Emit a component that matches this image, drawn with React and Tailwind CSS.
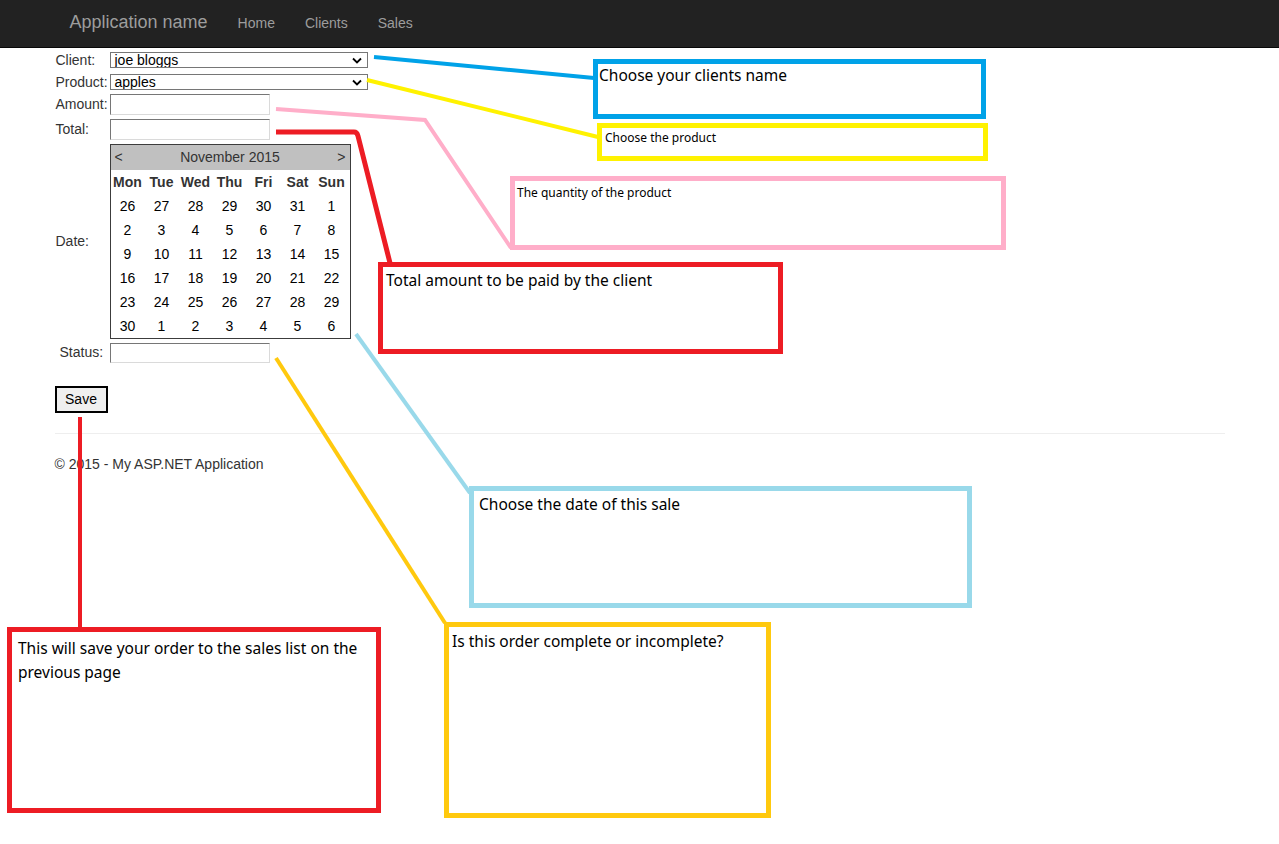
import React from 'react';

const weeks = [
  [26, 27, 28, 29, 30, 31, 1],
  [2, 3, 4, 5, 6, 7, 8],
  [9, 10, 11, 12, 13, 14, 15],
  [16, 17, 18, 19, 20, 21, 22],
  [23, 24, 25, 26, 27, 28, 29],
  [30, 1, 2, 3, 4, 5, 6],
];

const dayNames = ['Mon', 'Tue', 'Wed', 'Thu', 'Fri', 'Sat', 'Sun'];

const Chevron = () => (
  <svg width="10" height="7" viewBox="0 0 10 7" className="shrink-0">
    <path d="M1 1.5 L5 5.5 L9 1.5" fill="none" stroke="#000" strokeWidth="1.8" />
  </svg>
);

const FakeSelect = ({ value }) => (
  <div className="flex h-[16px] w-[258px] items-center justify-between overflow-hidden border border-[#767676] bg-white pl-[4px] pr-[5px] text-[14px] leading-[14px] text-black">
    <span className="-mt-[1px]">{value}</span>
    <Chevron />
  </div>
);

const TextBox = () => (
  <div className="h-[21px] w-[160px] border border-t-[#767676] border-l-[#767676] border-r-[#dadada] border-b-[#dadada] bg-white" />
);

const Calendar = () => (
  <div className="w-[241px] border border-[#3c3c3c] bg-white text-[14px] text-[#333]">
    <div className="flex h-[25px] items-center justify-between bg-[#c0c0c0] px-[4px]">
      <span>&lt;</span>
      <span>November 2015</span>
      <span>&gt;</span>
    </div>
    <div className="grid grid-cols-[repeat(7,34px)]">
      {dayNames.map((d) => (
        <div key={d} className="flex h-[24px] items-center justify-center font-bold">
          {d}
        </div>
      ))}
      {weeks.flat().map((n, i) => (
        <div key={i} className="flex h-[24px] items-center justify-center text-black">
          {n}
        </div>
      ))}
    </div>
  </div>
);

// annotation note, placed on the screenshot canvas
const Note = ({ className, children }) => (
  <div
    className={`absolute border-[5px] bg-white font-['Noto_Sans','Open_Sans',sans-serif] text-black ${className}`}
  >
    {children}
  </div>
);

export default function App() {
  return (
    <div className="relative h-[844px] w-full overflow-hidden bg-white font-['Liberation_Sans',Arial,sans-serif] text-[14px] text-[#333]">
      {/* Navbar */}
      <div className="h-[48px] border-b border-[#080808] bg-[#222]">
        <div className="mx-auto flex h-full w-[1170px] items-center px-[15px]">
          <span className="-mt-[3px] text-[18px] text-[#9d9d9d]">Application name</span>
          <nav className="ml-[30px] flex gap-[30px] text-[14px] text-[#9d9d9d]">
            <span>Home</span>
            <span>Clients</span>
            <span>Sales</span>
          </nav>
        </div>
      </div>

      {/* Body */}
      <div className="mx-auto w-[1170px] pt-[4px]">
        <div className="flex h-[16px] items-center">
          <span className="w-[55px] pl-[1px]">Client:</span>
          <FakeSelect value="joe bloggs" />
        </div>
        <div className="mt-[6px] flex h-[16px] items-center">
          <span className="w-[55px] pl-[1px]">Product:</span>
          <FakeSelect value="apples" />
        </div>
        <div className="mt-[4px] flex items-center">
          <span className="w-[55px] pl-[1px]">Amount:</span>
          <TextBox />
        </div>
        <div className="mt-[4px] flex items-center">
          <span className="w-[55px] pl-[1px]">Total:</span>
          <TextBox />
        </div>
        <div className="mt-[4px] flex items-center">
          <span className="w-[55px] pl-[1px]">Date:</span>
          <Calendar />
        </div>
        <div className="mt-[3px] flex items-center">
          <span className="w-[55px] pl-[5px]">Status:</span>
          <div className="h-[20px] w-[160px] border border-t-[#767676] border-l-[#767676] border-r-[#dadada] border-b-[#dadada] bg-white" />
        </div>

        <button className="mt-[23px] flex h-[27px] w-[53px] items-center justify-center border-2 border-black bg-[#efefef] text-[14px] text-black">
          Save
        </button>

        <hr className="mt-[20px] border-t border-[#eee]" />
        <footer className="mt-[20px] leading-[20px]">© 2015 - My ASP.NET Application</footer>
      </div>

      {/* Annotation lines */}
      <svg className="pointer-events-none absolute left-0 top-0" width="1279" height="844">
        <path d="M374 57 L594 78" stroke="#00a2e8" strokeWidth="4" fill="none" />
        <path d="M367 80 L598 137" stroke="#fff200" strokeWidth="4" fill="none" />
        <path d="M276 109 L425 120 L511 248" stroke="#ffaec9" strokeWidth="4" fill="none" />
        <path d="M276 132 L354 132 Q357 132 358 136 L390 263" stroke="#ed1c24" strokeWidth="5" fill="none" />
        <path d="M356 334 L470 493" stroke="#99d9ea" strokeWidth="4" fill="none" />
        <path d="M276 358 L445 623" stroke="#ffc90e" strokeWidth="4" fill="none" />
        <path d="M80 417 L80 628" stroke="#ed1c24" strokeWidth="4" fill="none" />
      </svg>

      {/* Annotation notes */}
      <Note className="left-[593px] top-[59px] h-[60px] w-[393px] border-[#00a2e8] pl-[1px] pt-[1px] text-[15.5px] leading-[20px]">
        Choose your clients name
      </Note>
      <Note className="left-[597px] top-[123px] h-[38px] w-[391px] border-[#fff200] pl-[3px] pt-[1px] text-[12px] leading-[17px]">
        Choose the product
      </Note>
      <Note className="left-[510px] top-[176px] h-[74px] w-[496px] border-[#ffaec9] pl-[2px] pt-[3px] text-[12px] leading-[18px]">
        The quantity of the product
      </Note>
      <Note className="left-[378px] top-[262px] h-[92px] w-[405px] border-[#ed1c24] pl-[3px] pt-[2px] text-[15.5px] leading-[22px]">
        Total amount to be paid by the client
      </Note>
      <Note className="left-[469px] top-[486px] h-[122px] w-[503px] border-[#99d9ea] pl-[5px] pt-[2px] text-[15.5px] leading-[22px]">
        Choose the date of this sale
      </Note>
      <Note className="left-[444px] top-[622px] h-[196px] w-[327px] border-[#ffc90e] pl-[3px] pt-[3px] text-[15.5px] leading-[22px]">
        Is this order complete or incomplete?
      </Note>
      <Note className="left-[7px] top-[627px] h-[186px] w-[374px] border-[#ed1c24] pl-[6px] pt-[4px] text-[15.5px] leading-[24px]">
        This will save your order to the sales list on the
        <br />
        previous page
      </Note>
    </div>
  );
}
